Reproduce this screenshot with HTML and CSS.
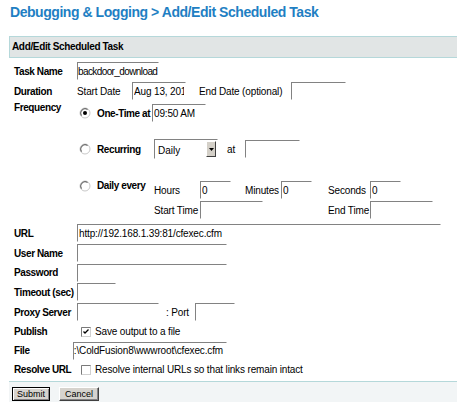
FILE: index.html
```html
<!DOCTYPE html>
<html>
<head>
<meta charset="utf-8">
<link rel="stylesheet" href="styles.css">
</head>
<body>
<h1 class="title">Debugging &amp; Logging &gt; Add/Edit Scheduled Task</h1>
<div class="panel">
  <div class="panel-head">Add/Edit Scheduled Task</div>
  <div class="form">
    <div class="row">
      <div class="lbl">Task Name</div>
      <input class="inp w-task tight" type="text" value="backdoor_download">
    </div>
    <div class="row">
      <div class="lbl">Duration</div>
      <span class="txt w-start">Start Date</span>
      <input class="inp w-date" type="text" value="Aug 13, 2010">
      <span class="txt w-end">End Date (optional)</span>
      <input class="inp w-date2" type="text" value="">
    </div>
    <div class="freq">
      <div class="lbl freq-lbl">Frequency</div>
      <div class="freq-body">
        <div class="frow once">
          <span class="radio"><svg width="12" height="12" viewBox="0 0 12 12"><circle cx="6" cy="6" r="5" fill="#fff" stroke="#c8c8c8"/><path d="M2.6 8.6 A4.3 4.3 0 0 1 8.6 2.6" fill="none" stroke="#6a6a6a" stroke-width="1.1"/><circle cx="6" cy="6" r="2" fill="#000"/></svg></span>
          <span class="opt w-once">One-Time at</span>
          <input class="inp w-date" type="text" value="09:50 AM">
        </div>
        <div class="frow recur">
          <span class="radio"><svg width="12" height="12" viewBox="0 0 12 12"><circle cx="6" cy="6" r="5" fill="#fff" stroke="#c8c8c8"/><path d="M2.6 8.6 A4.3 4.3 0 0 1 8.6 2.6" fill="none" stroke="#6a6a6a" stroke-width="1.1"/></svg></span>
          <span class="opt w-opt">Recurring</span>
          <div class="select">
            <span class="sel-text">Daily</span>
            <span class="sel-btn"><svg width="5" height="3" viewBox="0 0 5 3"><path d="M0 0 H5 L2.5 3 Z" fill="#000"/></svg></span>
          </div>
          <span class="txt at">at</span>
          <input class="inp w-at" type="text" value="">
        </div>
        <div class="frow daily">
          <span class="radio"><svg width="12" height="12" viewBox="0 0 12 12"><circle cx="6" cy="6" r="5" fill="#fff" stroke="#c8c8c8"/><path d="M2.6 8.6 A4.3 4.3 0 0 1 8.6 2.6" fill="none" stroke="#6a6a6a" stroke-width="1.1"/></svg></span>
          <span class="opt w-opt daily-lbl">Daily every</span>
          <div class="daily-grid">
            <span class="txt">Hours</span>
            <input class="inp w-small" type="text" value="0">
            <span class="txt">Minutes</span>
            <input class="inp w-small" type="text" value="0">
            <span class="txt">Seconds</span>
            <input class="inp w-small" type="text" value="0">
            <span class="txt">Start Time</span>
            <input class="inp w-time span3" type="text" value="">
            <span class="txt">End Time</span>
            <input class="inp w-time" type="text" value="">
          </div>
        </div>
      </div>
    </div>
    <div class="row">
      <div class="lbl">URL</div>
      <input class="inp w-url" type="text" value="http://192.168.1.39:81/cfexec.cfm">
    </div>
    <div class="row">
      <div class="lbl">User Name</div>
      <input class="inp w-user" type="text" value="">
    </div>
    <div class="row r19">
      <div class="lbl">Password</div>
      <input class="inp w-user" type="password" value="">
    </div>
    <div class="row">
      <div class="lbl">Timeout (sec)</div>
      <input class="inp w-timeout" type="text" value="">
    </div>
    <div class="row">
      <div class="lbl">Proxy Server</div>
      <input class="inp w-task" type="text" value="">
      <span class="txt port">: Port</span>
      <input class="inp w-port" type="text" value="">
    </div>
    <div class="row r19">
      <div class="lbl">Publish</div>
      <span class="check"><svg width="10" height="10" viewBox="0 0 10 10"><rect x="0.5" y="0.5" width="9" height="9" fill="#fff" stroke="#d0d0d0"/><path d="M0.5 9.5 V0.5 H9.5" fill="none" stroke="#7a7a7a"/><path d="M2.5 4.5 L4 6 L7.5 2.5" fill="none" stroke="#000" stroke-width="1.3"/></svg></span>
      <span class="txt">Save output to a file</span>
    </div>
    <div class="row r19">
      <div class="lbl">File</div>
      <div class="inp fake w-file"><span class="scrolled">c:\ColdFusion8\wwwroot\cfexec.cfm</span></div>
    </div>
    <div class="row r19">
      <div class="lbl">Resolve URL</div>
      <span class="check"><svg width="10" height="10" viewBox="0 0 10 10"><rect x="0.5" y="0.5" width="9" height="9" fill="#fff" stroke="#d0d0d0"/><path d="M0.5 9.5 V0.5 H9.5" fill="none" stroke="#7a7a7a"/></svg></span>
      <span class="txt">Resolve internal URLs so that links remain intact</span>
    </div>
  </div>
  <div class="panel-foot">
    <button class="btn btn-default" type="submit">Submit</button>
    <button class="btn" type="button">Cancel</button>
  </div>
</div>
</body>
</html>
```

FILE: styles.css
```css
html, body {
  margin: 0;
  padding: 0;
  background: #fff;
}
body {
  font-family: "Liberation Sans", Arial, sans-serif;
  font-size: 10px;
  color: #000;
  overflow: hidden;
}
.title {
  margin: 4px 0 16px 10px;
  font-size: 14px;
  line-height: 16px;
  font-weight: bold;
  color: #1f7fc3;
  letter-spacing: -0.45px;
  white-space: nowrap;
}
.panel {
  margin-left: 9px;
  width: 448px;
}
.panel-head {
  border: 1px solid #b5d8da;
  border-right: 0;
  background: #e1e5e5;
  height: 20px;
  line-height: 20px;
  padding-left: 2px;
  font-weight: bold;
  letter-spacing: -0.35px;
}
.form {
  padding: 3px 0 0 5px;
}
.row {
  display: flex;
  align-items: center;
  height: 20px;
}
.row.r19 {
  height: 19px;
}
.lbl {
  width: 63px;
  flex: none;
  font-weight: bold;
  letter-spacing: -0.4px;
  white-space: nowrap;
}
.txt {
  letter-spacing: -0.15px;
  white-space: nowrap;
  flex: none;
}
.opt {
  font-weight: bold;
  letter-spacing: -0.4px;
  white-space: nowrap;
  flex: none;
}
.inp {
  box-sizing: border-box;
  height: 18px;
  margin: 0;
  border: 1px solid;
  border-color: #828282 #fff #fff #828282;
  background: #fff;
  font-family: "Liberation Sans", Arial, sans-serif;
  font-size: 10px;
  letter-spacing: -0.15px;
  color: #000;
  padding: 0 1px;
  line-height: 16px;
  outline: none;
  flex: none;
}
.inp.tight {
  padding: 0;
  letter-spacing: -0.6px;
}
.fake {
  overflow: hidden;
  white-space: nowrap;
  padding: 0;
}
.scrolled {
  display: inline-block;
  margin-left: -5px;
}
.w-task { width: 82px; }
.w-start { width: 55px; }
.w-date { width: 54px; }
.w-end { width: 92px; margin-left: 13px; }
.w-date2 { width: 55px; }
.w-url { width: 364px; }
.w-user { width: 150px; }
.w-timeout { width: 39px; }
.w-port { width: 40px; }
.w-file { width: 154px; margin-left: -4px; }
.port { margin-left: 7px; width: 29px; }

.freq {
  display: flex;
  height: 122px;
}
.freq-lbl {
  line-height: 14px;
}
.freq-body {
  display: flex;
  flex-direction: column;
}
.frow {
  display: flex;
  align-items: center;
}
.radio {
  display: flex;
  width: 20px;
  flex: none;
  padding-left: 2px;
  box-sizing: border-box;
}
.once {
  height: 20px;
  margin-top: 2px;
}
.w-once { width: 55px; }
.w-opt { width: 57px; }
.recur {
  height: 20px;
  margin-top: 16px;
}
.select {
  box-sizing: border-box;
  width: 64px;
  height: 20px;
  border: 1px solid;
  border-color: #828282 #fff #fff #828282;
  display: flex;
  align-items: center;
  justify-content: space-between;
  flex: none;
}
.sel-text {
  padding-left: 3px;
  padding-top: 2px;
}
.sel-btn {
  box-sizing: border-box;
  width: 10px;
  height: 16px;
  margin-right: 1px;
  background: #d4d0c8;
  border: 1px solid;
  border-color: #fff #404040 #404040 #fff;
  display: flex;
  align-items: center;
  justify-content: center;
}
.at {
  margin-left: 9px;
  width: 18px;
}
.w-at { width: 55px; }
.daily {
  align-items: flex-start;
  margin-top: 21px;
}
.daily-lbl {
  line-height: 11px;
}
.daily-grid {
  display: grid;
  grid-template-columns: 46px 45px 36px 47px 42px auto;
  grid-auto-rows: 20px;
  align-items: center;
}
.w-small { width: 31px; }
.w-time { width: 63px; }
.span3 { grid-column: span 3; }

.check {
  display: flex;
  width: 18px;
  flex: none;
  padding-left: 4px;
  box-sizing: border-box;
}

.panel-foot {
  margin-top: 2px;
  border-top: 1px solid #b5d8da;
  background: #f2f5f6;
  height: 30px;
  padding: 5px 0 0 3px;
  display: flex;
  align-items: flex-start;
  gap: 9px;
}
.btn {
  box-sizing: border-box;
  height: 14px;
  margin: 0;
  padding: 0;
  font-family: "Liberation Sans", Arial, sans-serif;
  font-size: 9px;
  line-height: 10px;
  color: #000;
  background: #d6d3ce;
  border: 1px solid;
  border-color: #fff #404040 #404040 #fff;
  box-shadow: inset -1px -1px 0 #848284;
  width: 40px;
}
.btn-default {
  width: 38px;
  border: 1px solid #000;
  box-shadow: inset 1px 1px 0 #fff, inset -1px -1px 0 #848284;
}
```
